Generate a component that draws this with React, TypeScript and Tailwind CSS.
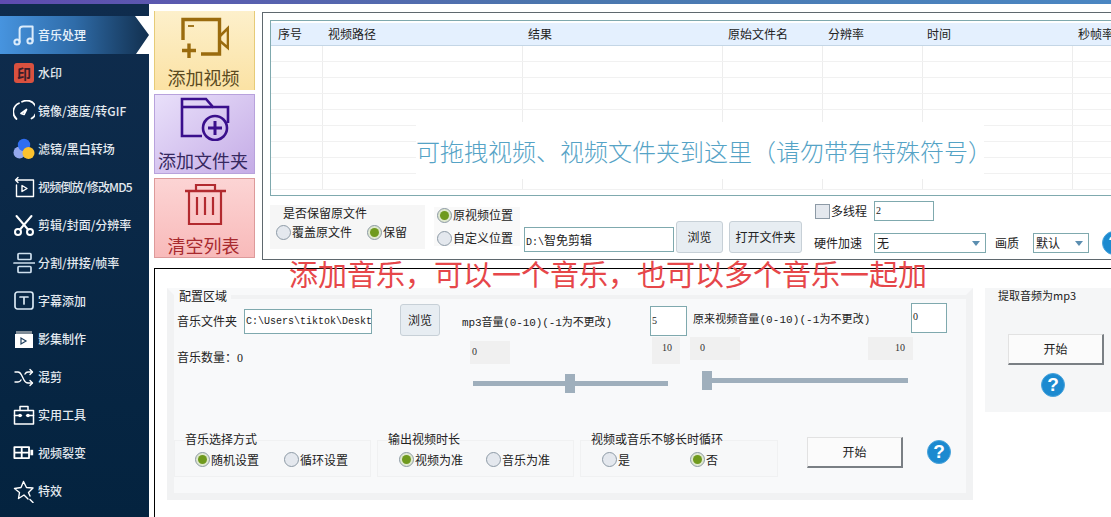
import React from "react";

const Radio = ({ on }: { on?: boolean }) => (
  <span className={`w-[15px] h-[15px] shrink-0 rounded-full border border-[#8d9aa6] flex items-center justify-center ${on ? "bg-[#dfe8cf]" : "bg-[#e4e8ee]"}`}>
    {on && <span className="w-[9px] h-[9px] rounded-full bg-[#6f9a1e]" />}
  </span>
);

const RadioLabel = ({ on, label, cls }: { on?: boolean; label: string; cls?: string }) => (
  <span className={`flex items-center gap-[1px] text-[12px] leading-[16px] text-[#222] ${cls ?? ""}`}>
    <Radio on={on} />
    {label}
  </span>
);

const Help = ({ cls }: { cls?: string }) => (
  <span className={`w-[24px] h-[24px] shrink-0 rounded-full bg-[#1c8ad0] border border-[#4aa4dc] text-white font-bold text-[19px] leading-[22px] text-center font-['Liberation_Sans',sans-serif] ${cls ?? ""}`}>?</span>
);

const GrayBtn = ({ label, cls }: { label: string; cls: string }) => (
  <button className={`shrink-0 rounded-[3px] border border-[#c7d0d7] bg-[#e7edf2] text-[12px] text-[#222] ${cls}`}>{label}</button>
);

const StartBtn = ({ cls }: { cls: string }) => (
  <button className={`shrink-0 bg-[#fbfbfb] border-t border-l border-[#e2e2e2] border-r-2 border-b-2 border-r-[#7a7f84] border-b-[#7a7f84] text-[12px] text-[#222] ${cls}`}>开始</button>
);

const Group = ({ title, w, children, cls }: { title: string; w: string; children: React.ReactNode; cls?: string }) => (
  <div className={`flex flex-col shrink-0 ${w} ${cls ?? ""}`}>
    <div className="ml-[11px] text-[12px] leading-[16px] text-[#222] z-10">{title}</div>
    <div className="flex items-center border border-[#f0f1f2] bg-[#f7f8f9] h-[37px] -mt-[7px] pt-[2px]">{children}</div>
  </div>
);

const Slider = ({ w, pos, left, right, leftW, rightW }: { w: string; pos: string; left: string; right: string; leftW: string; rightW: string }) => (
  <div className="flex flex-col">
    <div className="flex justify-between h-[23px] text-[10px] font-['Liberation_Serif',serif] text-[#333]">
      <span className={`bg-[#f0f0f0] pl-[2px] pt-[3px] ${leftW}`}>{left}</span>
      <span className={`bg-[#f0f0f0] pr-[8px] pt-[3px] text-right ${rightW}`}>{right}</span>
    </div>
    <div className={`flex items-center h-[20px] mt-[9px] ml-[3px] ${w}`}>
      <span className={`h-[5px] bg-[#9fafbc] ${pos}`} />
      <span className="w-[10px] h-[19px] bg-[#9fafbc] shrink-0" />
      <span className="h-[5px] bg-[#9fafbc] flex-1" />
    </div>
  </div>
);

const s = { fill: "none", stroke: "currentColor", strokeWidth: 1.7, strokeLinecap: "round" as const, strokeLinejoin: "round" as const };

const icons: React.ReactNode[] = [
  <svg key="0" width="22" height="22" viewBox="0 0 22 22" className="text-[#dcecfb]" {...s} strokeWidth={2}>
    <circle cx="4" cy="18" r="2.6" /><circle cx="17" cy="17" r="2.6" /><path d="M6.6 18V5.5Q6.6 2.5 10 2.5H19.6V17" />
  </svg>,
  <span key="1" className="w-[20px] h-[20px] rounded-[3px] bg-[#d9513f] text-[#3a1d2a] text-[14px] font-bold leading-[20px] text-center">印</span>,
  <svg key="2" width="22" height="22" viewBox="0 0 22 22" className="text-white" {...s}>
    <path d="M3.5 19A9.5 9.5 0 0 1 6 3.2M9 1.8a9.5 9.5 0 0 1 9.5 16.8" /><path d="M8 13.5l5.5-4-2.5 5z" />
  </svg>,
  <svg key="3" width="22" height="22" viewBox="0 0 22 22">
    <circle cx="6.5" cy="14.5" r="6" fill="#94a8ec" /><circle cx="11" cy="7" r="6.2" fill="#2f6df0" /><circle cx="15.5" cy="15" r="6" fill="#fbc22e" />
  </svg>,
  <svg key="4" width="22" height="22" viewBox="0 0 22 22" className="text-white" {...s} strokeWidth={1.4}>
    <path d="M5 1.5L2.5 4l2.5 2.5M2.5 4H20.5V20.5H3.5V9" /><path d="M9 9.5v6l5-3z" />
  </svg>,
  <svg key="5" width="22" height="22" viewBox="0 0 22 22" className="text-white" {...s} strokeWidth={2}>
    <circle cx="5" cy="18" r="3" /><circle cx="17" cy="18" r="3" /><path d="M7 15.5L18.5 2M15 15.5L3.5 2" />
  </svg>,
  <svg key="6" width="22" height="22" viewBox="0 0 22 22" className="text-[#cfe0ee]" {...s} strokeWidth={1.7}>
    <rect x="5" y="1.5" width="13" height="6" rx="1" /><path d="M1 11H22" /><rect x="5" y="14.5" width="13" height="6" rx="1" />
  </svg>,
  <svg key="7" width="22" height="22" viewBox="0 0 22 22" className="text-[#d9e8f3]" {...s}>
    <rect x="2" y="2" width="18" height="17" rx="2.5" /><path d="M7 7H15M11 7V14" />
  </svg>,
  <svg key="8" width="22" height="22" viewBox="0 0 22 22">
    <path d="M3 3H19V6H3z" fill="#7f8c97" /><path d="M2 6H20V20H2z" fill="#fff" /><path d="M8 10v6l5-3z" fill="none" stroke="#20405f" strokeWidth="1.2" />
  </svg>,
  <svg key="9" width="22" height="22" viewBox="0 0 22 22" className="text-white" {...s} strokeWidth={1.4}>
    <path d="M2 6H5Q7 6 8.5 9L11 14Q12.5 17 15 17H19M2 16H5Q7 16 8 14M12 8Q13 6 15 6H19" /><path d="M17 3.5L19.5 6 17 8.5M17 14.5L19.5 17 17 19.5" />
  </svg>,
  <svg key="10" width="22" height="22" viewBox="0 0 22 22" className="text-white" {...s} strokeWidth={1.5}>
    <rect x="1.5" y="6.5" width="19" height="13.5" /><path d="M7 6.5V2.5H15V6.5M1.5 11.5H7M15 11.5H20.5M7 11.5h1.5M13.5 11.5H15" /><circle cx="7" cy="11.5" r="1" /><circle cx="15" cy="11.5" r="1" />
  </svg>,
  <svg key="11" width="24" height="18" viewBox="0 0 24 18" className="text-white" {...s} strokeLinecap="butt" strokeWidth={2}>
    <rect x="1.5" y="2.5" width="16" height="12" /><path d="M9.5 2.5V14.5M1.5 8.5H17.5" /><path d="M20.5 5.5V11.5" strokeWidth={3} />
  </svg>,
  <svg key="12" width="22" height="24" viewBox="0 0 22 24" className="text-white" {...s} strokeWidth={1.4}>
    <path d="M15 20L11 16 5.5 19.5 6.5 13.5 1.5 9.5 8 8.5 10.5 2.5 13.5 8.5 20 9 15.5 13.5 17 17" /><path d="M17 20.5L20 23.5" />
  </svg>,
];

const menu = ["音乐处理", "水印", "镜像/速度/转GIF", "滤镜/黑白转场", "视频倒放/修改MD5", "剪辑/封面/分辨率", "分割/拼接/帧率", "字幕添加", "影集制作", "混剪", "实用工具", "视频裂变", "特效"];

const cols = [
  { t: "序号", w: "w-[52px]", p: "pl-[7px]" },
  { t: "视频路径", w: "w-[200px]", p: "pl-[5px]" },
  { t: "结果", w: "w-[200px]", p: "pl-[5px]" },
  { t: "原始文件名", w: "w-[100px]", p: "pl-[5px]" },
  { t: "分辨率", w: "w-[100px]", p: "pl-[5px]" },
  { t: "时间", w: "w-[150px]", p: "pl-[4px]" },
  { t: "秒帧率", w: "w-[100px]", p: "pl-[5px]" },
];

export default function App() {
  return (
    <div className="w-[1111px] h-[517px] overflow-hidden flex flex-col bg-white font-['Noto_Sans_CJK_SC',sans-serif]">
      <div className="h-[4px] shrink-0 bg-gradient-to-r from-[#5f4bb0] via-[#4a76ad] to-[#4a86c2]" />
      <div className="flex flex-1 min-h-0">
        {/* sidebar */}
        <nav className="w-[149px] shrink-0 pt-[12px] flex flex-col bg-gradient-to-b from-[#0f2c4d] to-[#04233f]">
          {menu.map((m, i) => (
            <div key={m} className={`relative h-[38px] shrink-0 flex items-center pl-[13px] gap-[3px] text-[12px] font-medium whitespace-nowrap ${i === 0 ? "bg-gradient-to-r from-[#4794df] via-[#2f6ca9] to-[#12304f] text-[#e8f2fb]" : "text-[#e3e9ef]"}`}>
              <span className="w-[22px] h-[24px] shrink-0 flex items-center justify-center">{icons[i]}</span>
              <span className={i === 4 ? "tracking-[-0.8px]" : ""}>{m}</span>
              {i === 0 && (
                <svg width="14" height="38" viewBox="0 0 14 38" className="absolute right-0 top-0">
                  <path d="M0 0H14V19zM1 38H14V19z" fill="#fff" />
                </svg>
              )}
            </div>
          ))}
        </nav>

        {/* main */}
        <main className="relative flex-1 min-w-0 flex flex-col overflow-hidden">
          <div className="flex h-[264px] shrink-0 pl-[5px] pt-[7px]">
            {/* action buttons */}
            <div className="w-[101px] shrink-0 flex flex-col gap-[4px]">
              <button className="h-[79px] flex flex-col items-center border-x border-[#e6cb78] bg-gradient-to-b from-[#fdf0cb] to-[#fbe2a4] text-[18px] leading-[24px] text-[#5b4a20] pr-[2px]">
                <svg width="48" height="42" viewBox="0 0 48 42" className="mt-[6px] shrink-0 ml-[2px]" fill="none" stroke="#9a6b0e" strokeWidth="3.4">
                  <path d="M2 23V2.5H38.5V37H20" /><path d="M1 33.5H15M8 26.5V41" /><path d="M7 9H13" strokeWidth="1.8" /><path d="M39 19L47 11V31L39 24" strokeWidth="2.6" />
                </svg>
                <span className="mt-[6px]">添加视频</span>
              </button>
              <button className="h-[80px] flex flex-col items-center border border-[#b8a2dc] bg-gradient-to-br from-[#e9e0fa] to-[#c5ace6] text-[18px] leading-[24px] text-[#36285f] pr-[3px]">
                <svg width="50" height="44" viewBox="0 0 50 44" className="mt-[2px] shrink-0 ml-[3px]" fill="none" stroke="#3a0f8c" strokeWidth="2.6">
                  <path d="M22 39H2V2H26L33 10H48V26" /><path d="M2 10H33" /><circle cx="35" cy="31" r="12" fill="none" /><path d="M28 31H42M35 24V38" strokeWidth="3" />
                </svg>
                <span className="mt-[7px]">添加文件夹</span>
              </button>
              <button className="h-[80px] flex flex-col items-center border border-[#dd9a9a] bg-gradient-to-b from-[#fcd4d4] to-[#f8baba] text-[18px] leading-[24px] text-[#a82a2e] pr-[2px]">
                <svg width="44" height="44" viewBox="0 0 44 44" className="mt-[3px] shrink-0 ml-[2px]" fill="none" stroke="#b22a2f" strokeWidth="2.2">
                  <path d="M2 9H43" strokeWidth="2.6" /><path d="M13 8V3H32V8" /><path d="M6 9V42H38V9" /><path d="M14 15V33M22 15V33M30 15V33" />
                </svg>
                <span className="mt-[7px]">清空列表</span>
              </button>
            </div>

            {/* list panel */}
            <section className="ml-[7px] w-[900px] h-[248px] shrink-0 mt-[1px] border-l border-y border-[#5f686e] pl-[7px] pt-[7px]">
              <div className="relative w-[880px] h-[176px] border border-[#7fa9ae] pt-[2px] overflow-hidden">
                <div className="flex h-[23px] bg-[#e4f0fe] border-b border-[#c4d6e6] text-[12px] leading-[21px] text-[#222]">
                  {cols.map((c) => (
                    <div key={c.t} className={`${c.w} ${c.p} shrink-0`}>{c.t}</div>
                  ))}
                </div>
                {Array.from({ length: 9 }).map((_, r) => (
                  <div key={r} className="flex h-[16px] border-b border-[#f1f1f1]">
                    {cols.map((c) => (
                      <div key={c.t} className={`${c.w} shrink-0 border-r border-[#ededed]`} />
                    ))}
                  </div>
                ))}
                <div className="absolute left-[145px] top-[101px] w-[568px] h-[57px] bg-white text-center text-[24px] leading-[57px] text-[#55a3c6] font-light whitespace-nowrap">可拖拽视频、视频文件夹到这里（请勿带有特殊符号）</div>
              </div>

              {/* controls */}
              <div className="flex items-start h-[56px] mt-[5px]">
                <div className="w-[155px] shrink-0 mt-[4px] h-[44px] bg-[#f6f6f6] flex flex-col pl-[13px] text-[12px] leading-[16px] text-[#222]">
                  <div>是否保留原文件</div>
                  <div className="flex items-center -ml-[7px] mt-[3px]">
                    <RadioLabel label="覆盖原文件" />
                    <RadioLabel on label="保留" cls="ml-[15px]" />
                  </div>
                </div>
                <div className="ml-[9px] w-[86px] shrink-0 h-[39px] mt-[6px] flex flex-col justify-between bg-[#f9f9f9] pl-[3px]">
                  <RadioLabel on label="原视频位置" />
                  <RadioLabel label="自定义位置" />
                </div>
                <div className="ml-[4px] mt-[26px] w-[150px] h-[25px] shrink-0 border border-[#7fa9ae] text-[12px] leading-[24px] pl-[1px] text-[#222] whitespace-nowrap"><span className="text-[10px] font-['Liberation_Mono',monospace]">D:\</span>智免剪辑</div>
                <GrayBtn label="浏览" cls="ml-[2px] mt-[20px] w-[47px] h-[32px]" />
                <GrayBtn label="打开文件夹" cls="ml-[6px] mt-[20px] w-[73px] h-[32px]" />
                <div className="ml-[12px] shrink-0 flex flex-col text-[12px] text-[#222]">
                  <div className="flex items-center h-[20px]">
                    <span className="w-[15px] h-[15px] ml-[1px] border border-[#8d9aa6] bg-[#e4e8ee]" />
                    <span className="ml-[1px]">多线程</span>
                    <span className="ml-[7px] w-[60px] h-[20px] border border-[#7fa9ae] text-[10px] leading-[18px] pl-[1px] font-['Liberation_Serif',serif]">2</span>
                  </div>
                  <div className="flex items-center h-[20px] mt-[12px]">
                    <span className="w-[60px] shrink-0">硬件加速</span>
                    <span className="w-[112px] h-[20px] shrink-0 border border-[#7fa9ae] flex items-center justify-between pl-[2px] pr-[5px]">无<i className="border-x-[4px] border-x-transparent border-t-[5px] border-t-[#5b8eb0]" /></span>
                    <span className="ml-[9px] w-[38px] shrink-0">画质</span>
                    <span className="w-[56px] h-[20px] shrink-0 border border-[#7fa9ae] flex items-center justify-between pl-[2px] pr-[5px]">默认<i className="border-x-[4px] border-x-transparent border-t-[5px] border-t-[#5b8eb0]" /></span>
                    <Help cls="ml-[13px]" />
                  </div>
                </div>
              </div>
            </section>
          </div>

          {/* music panel */}
          <section className="ml-[5px] flex-1 border-l border-t border-black flex pl-[12px] pt-[20px] items-start">
            <div className="w-[806px] h-[212px] shrink-0 border-[7px] border-[#f1f2f3] bg-[#f8f9fa] flex flex-col -mt-[1px] border-t-[#f8f9fa]">
              <div className="flex items-center -mt-[7px] h-[16px]">
                <div className="ml-[5px] text-[12px] leading-[16px] text-[#222]">配置区域</div>
                <span className="ml-[4px] flex-1 h-[4px] mt-[2px] bg-[#f1f2f3]" />
              </div>
              <div className="flex h-[111px]">
                {/* left */}
                <div className="w-[288px] shrink-0 flex flex-col pl-[3px] text-[12px] text-[#222]">
                  <div className="flex items-start">
                    <span className="mt-[8px] w-[67px] shrink-0">音乐文件夹</span>
                    <span className="mt-[5px] w-[128px] h-[25px] shrink-0 border border-[#7fa9ae] bg-white pl-[1px] text-[10px] leading-[24px] whitespace-nowrap overflow-hidden font-['Liberation_Mono',monospace]">C:\Users\tiktok\Deskt</span>
                    <GrayBtn label="浏览" cls="ml-[28px] w-[40px] h-[32px]" />
                  </div>
                  <div className="mt-[12px] text-[12px] leading-[18px]">音乐数量：<span className="font-['Liberation_Serif',serif]">0</span></div>
                </div>
                {/* mp3 */}
                <div className="w-[231px] shrink-0 flex flex-col">
                  <div className="flex items-start h-[37px] text-[11px] text-[#222]">
                    <span className="mt-[11px] w-[188px] whitespace-nowrap font-['Liberation_Mono','Noto_Sans_CJK_SC',monospace] tracking-[-0.1px]">mp3音量(0-10)(-1为不更改)</span>
                    <span className="mt-[2px] w-[37px] h-[30px] border border-[#7fa9ae] bg-white text-[10px] leading-[28px] pl-[1px] font-['Liberation_Serif',serif]">5</span>
                  </div>
                  <div className="w-[210px] ml-[8px]">
                    <Slider w="w-[195px]" pos="w-[92px]" left="0" right="10" leftW="w-[40px] pl-[1px]" rightW="w-[28px] -mt-[4px]" />
                  </div>
                </div>
                {/* video */}
                <div className="flex flex-col -ml-[3px]">
                  <div className="flex items-start h-[30px] text-[11px] text-[#222] -mt-[1px] -ml-[5px]">
                    <span className="mt-[9px] w-[218px] whitespace-nowrap font-['Liberation_Mono','Noto_Sans_CJK_SC',monospace] tracking-[0.07px] ml-[8px]">原来视频音量(0-10)(-1为不更改)</span>
                    <span className="w-[36px] h-[30px] border border-[#7fa9ae] bg-white text-[10px] leading-[26px] pl-[1px] font-['Liberation_Serif',serif]">0</span>
                  </div>
                  <div className="w-[223px] mt-[4px]">
                    <Slider w="w-[206px] ml-[12px] !mt-[10px]" pos="w-[0px]" left="0" right="10" leftW="w-[50px] pl-[10px]" rightW="w-[45px]" />
                  </div>
                </div>
              </div>
              {/* bottom groups */}
              <div className="flex items-start mt-[16px]">
                <Group title="音乐选择方式" w="w-[197px]">
                  <RadioLabel on label="随机设置" cls="ml-[20px]" />
                  <RadioLabel label="循环设置" cls="ml-[25px]" />
                </Group>
                <Group title="输出视频时长" w="w-[197px]" cls="ml-[6px]">
                  <RadioLabel on label="视频为准" cls="ml-[21px]" />
                  <RadioLabel label="音乐为准" cls="ml-[23px]" />
                </Group>
                <Group title="视频或音乐不够长时循环" w="w-[198px]" cls="ml-[6px]">
                  <RadioLabel label="是" cls="ml-[21px]" />
                  <RadioLabel on label="否" cls="ml-[60px]" />
                </Group>
                <StartBtn cls="ml-[29px] mt-[6px] w-[96px] h-[31px]" />
                <Help cls="ml-[24px] mt-[9px]" />
              </div>
            </div>

            <div className="ml-[12px] w-[140px] h-[124px] shrink-0 -mt-[1px] bg-[#f5f6f7] flex flex-col">
              <div className="ml-[13px] text-[11px] leading-[14px] text-[#222]">提取音频为mp3</div>
              <StartBtn cls="ml-[23px] mt-[32px] w-[96px] h-[31px]" />
              <Help cls="ml-[56px] mt-[8px]" />
            </div>
          </section>

          <div className="absolute left-[140px] top-[254px] text-[29px] leading-[30px] text-[#e6474a] whitespace-nowrap">添加音乐，可以一个音乐，也可以多个音乐一起加</div>
        </main>
      </div>
    </div>
  );
}
